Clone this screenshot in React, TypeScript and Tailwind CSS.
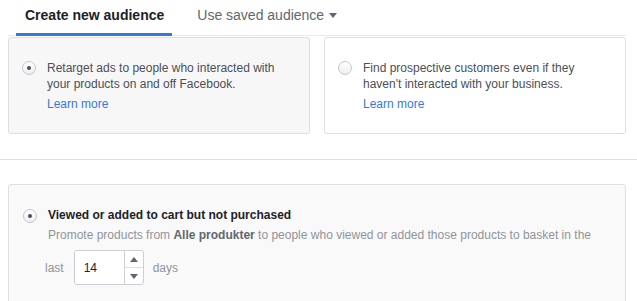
import React, { useState } from 'react';

function Radio({ checked }: { checked: boolean }) {
  return (
    <span className="flex h-[14px] w-[14px] shrink-0 items-center justify-center rounded-full border border-[#c4c7cc] bg-gradient-to-b from-[#ffffff] to-[#eceef0]">
      {checked && <span className="h-[4px] w-[4px] rounded-full bg-[#4b4f56]" />}
    </span>
  );
}

function OptionCard({ checked, text, onPick }: { checked: boolean; text: string; onPick: () => void }) {
  return (
    <div
      onClick={onPick}
      className={`flex h-[97px] flex-1 items-start rounded-[3px] border border-[#dddfe2] pl-[13px] pr-[14px] pt-[23px] ${checked ? 'bg-[#f7f7f7]' : 'bg-white'}`}
    >
      <Radio checked={checked} />
      <div className="ml-[11px] -mt-[1px] text-[12px] leading-[16px] text-[#4b4f56]">
        <p>{text}</p>
        <a className="mt-[4px] block text-[#3578e5]">Learn more</a>
      </div>
    </div>
  );
}

export default function App() {
  const [picked, setPicked] = useState<'retarget' | 'prospect'>('retarget');
  const [days, setDays] = useState(14);

  return (
    <div className="h-[301px] w-[637px] overflow-hidden bg-white font-['Liberation_Sans',Arial,sans-serif]">
      <div className="pl-2 pr-[11px]">
        {/* tabs */}
        <div className="flex h-[36px] border-b border-[#e9eaed] pl-2">
          <div className="h-[36px] border-b-[3px] border-[#3578e5] pl-[9px] pr-[8px] pt-[6px] text-[14px] font-bold leading-[18px] text-[#1d2129]">
            Create new audience
          </div>
          <div className="ml-[16px] flex h-[35px] items-start pl-[9px] pt-[6px] text-[14px] leading-[18px] text-[#606770]">
            Use saved audience
            <span className="ml-[5px] mt-[7px] h-0 w-0 border-x-[4px] border-t-[5px] border-x-transparent border-t-[#606770]" />
          </div>
        </div>

        <div className="mt-[1px] flex gap-[14px]">
          <OptionCard
            checked={picked === 'retarget'}
            onPick={() => setPicked('retarget')}
            text="Retarget ads to people who interacted with your products on and off Facebook."
          />
          <OptionCard
            checked={picked === 'prospect'}
            onPick={() => setPicked('prospect')}
            text="Find prospective customers even if they haven't interacted with your business."
          />
        </div>
      </div>

      <div className="mt-[25px] border-t border-[#dddfe2]" />

      <div className="mt-[24px] pl-2 pr-[11px]">
        <div className="flex h-[140px] items-start rounded-[3px] border border-[#dddfe2] bg-[#f9f9f9] pl-[14px] pt-[24px]">
          <Radio checked />
          <div className="ml-[11px] -mt-[2px] text-[12px] leading-[16px]">
            <p className="font-bold text-[#1d2129]">Viewed or added to cart but not purchased</p>
            <p className="mt-[4px] text-[#90949c]">
              Promote products from <span className="font-bold text-[#606770]">Alle produkter</span> to people who viewed or added those products to basket in the
            </p>
            <div className="-ml-[3px] mt-[7px] flex items-center text-[#90949c]">
              <span>last</span>
              <div className="ml-[10px] flex h-[35px] w-[70px] overflow-hidden rounded-[3px] border border-[#ccd0d5] bg-white">
                <span className="flex flex-1 items-center pl-[9px] text-[#1d2129]">{days}</span>
                <div className="flex w-[19px] flex-col border-l border-[#ccd0d5]">
                  <button
                    onClick={() => setDays(d => d + 1)}
                    className="flex flex-1 items-center justify-center border-b border-[#dddfe2]"
                  >
                    <span className="h-0 w-0 border-x-[4px] border-b-[5px] border-x-transparent border-b-[#606770]" />
                  </button>
                  <button
                    onClick={() => setDays(d => Math.max(1, d - 1))}
                    className="flex flex-1 items-center justify-center"
                  >
                    <span className="h-0 w-0 border-x-[4px] border-t-[5px] border-x-transparent border-t-[#606770]" />
                  </button>
                </div>
              </div>
              <span className="ml-[9px]">days</span>
            </div>
          </div>
        </div>
      </div>
    </div>
  );
}
